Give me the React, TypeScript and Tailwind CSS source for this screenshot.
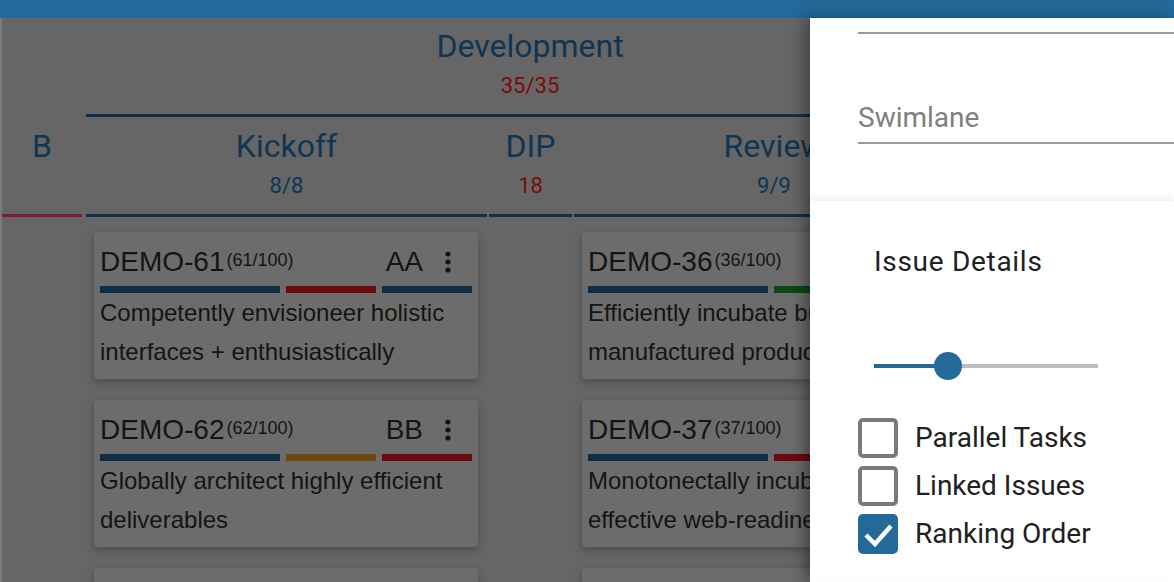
import React from 'react';

interface Bar {
  cls: string;
}

interface Issue {
  id: string;
  score: number;
  who?: string;
  bars: Bar[];
  text: string;
}

const BLUE = 'flex-[2] bg-[#0f2d45]';
const RED = 'flex-1 bg-[#6b0a0e]';
const ORANGE = 'flex-1 bg-[#6e4612]';
const GREEN = 'flex-1 bg-[#0b4814]';
const NAVY = 'flex-1 bg-[#0f2d45]';

const kickoff: Issue[] = [
  { id: 'DEMO-61', score: 61, who: 'AA', bars: [{ cls: BLUE }, { cls: RED }, { cls: NAVY }], text: 'Competently envisioneer holistic interfaces + enthusiastically' },
  { id: 'DEMO-62', score: 62, who: 'BB', bars: [{ cls: BLUE }, { cls: ORANGE }, { cls: RED }], text: 'Globally architect highly efficient deliverables' },
  { id: 'DEMO-63', score: 63, who: 'CC', bars: [{ cls: BLUE }, { cls: GREEN }, { cls: NAVY }], text: 'Dynamically leverage existing scalable methods' },
];

const review: Issue[] = [
  { id: 'DEMO-36', score: 36, who: 'DD', bars: [{ cls: BLUE }, { cls: GREEN }, { cls: NAVY }], text: 'Efficiently incubate business manufactured products' },
  { id: 'DEMO-37', score: 37, who: 'AA', bars: [{ cls: BLUE }, { cls: RED }, { cls: NAVY }], text: 'Monotonectally incubate cost effective web-readiness' },
  { id: 'DEMO-38', score: 38, who: 'BB', bars: [{ cls: BLUE }, { cls: ORANGE }, { cls: RED }], text: 'Rapidly synthesize proactive action items' },
];

const Kebab = () => (
  <svg width="8" height="22" viewBox="0 0 8 22">
    <circle cx="4" cy="3" r="2.6" fill="#141414" />
    <circle cx="4" cy="11" r="2.6" fill="#141414" />
    <circle cx="4" cy="19" r="2.6" fill="#141414" />
  </svg>
);

const IssueCard: React.FC<{ issue: Issue }> = ({ issue }) => (
  <div className="bg-[#6c6c6c] rounded-[4px] shadow-[0_3px_9px_rgba(0,0,0,0.28)] px-[6px] pt-[12px] pb-[8px] font-['Liberation_Sans',Arial,sans-serif] text-[#141414] shrink-0">
    <div className="flex items-start h-[36px]">
      <span className="text-[28px] leading-[36px]">{issue.id}</span>
      <span className="text-[18px] leading-[18px] mt-[7px] ml-[2px]">({issue.score}/100)</span>
      {issue.who && (
        <>
          <span className="ml-auto mr-[5px] text-[28px] leading-[36px]">{issue.who}</span>
          <div className="w-[40px] mr-[4px] h-[36px] flex items-center justify-center">
            <Kebab />
          </div>
        </>
      )}
    </div>
    <div className="flex gap-[6px] mt-[6px] h-[7px]">
      {issue.bars.map((b, i) => (
        <div key={i} className={`h-full ${b.cls}`} />
      ))}
    </div>
    <p className="text-[24px] leading-[39px]">{issue.text}</p>
  </div>
);

const Column: React.FC<{
  name: string;
  count: string;
  countCls: string;
  widthCls: string;
  padCls: string;
  issues: Issue[];
}> = ({ name, count, countCls, widthCls, padCls, issues }) => (
  <div className={`${widthCls} shrink-0 flex flex-col`}>
    <div className="shrink-0 mt-[13px] text-[32px] leading-[32px] text-center text-[#0f3553]">{name}</div>
    <div className={`shrink-0 mt-[12px] text-[22px] leading-[24px] text-center ${countCls}`}>{count}</div>
    <div className="shrink-0 mt-[16px] h-[3px] bg-[#0e304c]" />
    <div className={`mt-[15px] flex flex-col gap-[21px] ${padCls}`}>
      {issues.map((it) => (
        <IssueCard key={it.id} issue={it} />
      ))}
    </div>
  </div>
);

const CheckRow: React.FC<{ label: string; checked?: boolean }> = ({ label, checked }) => (
  <div className="h-[48px] flex items-center gap-[17px]">
    {checked ? (
      <div className="w-[40px] h-[40px] rounded-[5px] bg-[#236a9b] flex items-center justify-center">
        <svg width="40" height="40" viewBox="0 0 40 40">
          <polyline points="8,21 17,30 33,12" fill="none" stroke="white" strokeWidth="4.5" />
        </svg>
      </div>
    ) : (
      <div className="w-[40px] h-[40px] rounded-[5px] border-[4px] border-[#7a7a7a]" />
    )}
    <span className="text-[28px] leading-[32px] text-[#212121]">{label}</span>
  </div>
);

export default function App() {
  return (
    <div className="w-[1174px] h-[582px] overflow-hidden flex flex-col font-['Roboto',sans-serif]">
      <div className="h-[18px] bg-[#23699a] shrink-0" />
      <div className="flex flex-1 min-h-0">
        {/* Board, dimmed */}
        <div className="flex-1 min-w-0 overflow-hidden bg-[#666666] flex items-start">
          <div className="w-[2px] h-full bg-[#7a7a7a] shrink-0" />
          <div className="w-[80px] shrink-0 flex flex-col pt-[112px]">
            <div className="text-[32px] leading-[32px] text-center text-[#0f3553]">B</div>
            <div className="mt-[52px] h-[3px] bg-[#7c1a3c]" />
          </div>
          <div className="w-[4px] shrink-0" />
          <div className="w-[888px] shrink-0 flex flex-col pt-[12px]">
            <div className="shrink-0 text-[32px] leading-[32px] text-center text-[#0f3553]">Development</div>
            <div className="shrink-0 mt-[12px] text-[22px] leading-[24px] text-center text-[#7d0a0a]">35/35</div>
            <div className="shrink-0 mt-[16px] h-[3px] bg-[#0e304c]" />
            <div className="flex gap-[2px]">
              <Column name="Kickoff" count="8/8" countCls="text-[#0f3553]" widthCls="w-[401px]" padCls="pl-[8px] pr-[9px]" issues={kickoff} />
              <Column name="DIP" count="18" countCls="text-[#7d0a0a]" widthCls="w-[83px]" padCls="px-[8px]" issues={[]} />
              <Column name="Review" count="9/9" countCls="text-[#0f3553]" widthCls="w-[400px]" padCls="px-[8px]" issues={review} />
            </div>
          </div>
        </div>

        {/* Settings drawer */}
        <aside className="w-[364px] shrink-0 bg-white relative z-10 shadow-[-6px_0_14px_rgba(0,0,0,0.35)] flex flex-col">
          <div className="h-[183px] shrink-0 pl-[48px]">
            <div className="h-[16px] border-b-2 border-[#9a9a9a]" />
            <div className="mt-[68px] pb-[8px] border-b-2 border-[#9a9a9a] text-[28px] leading-[32px] text-[#808080]">
              Swimlane
            </div>
          </div>
          <div className="flex-1 mb-[4px] bg-white shadow-[0_-3px_8px_rgba(0,0,0,0.07)] pl-[48px] pt-[45px]">
            <div className="ml-[16px] text-[28px] leading-[32px] tracking-[0.7px] text-[#212121]">Issue Details</div>
            <div className="ml-[16px] mt-[74px] w-[224px] h-[28px] relative">
              <div className="absolute left-0 right-0 top-[12px] h-[4px] bg-[#bdbdbd]" />
              <div className="absolute left-0 w-[74px] top-[12px] h-[4px] bg-[#236a9b]" />
              <div className="absolute left-[60px] top-0 w-[28px] h-[28px] rounded-full bg-[#236a9b]" />
            </div>
            <div className="mt-[34px] flex flex-col">
              <CheckRow label="Parallel Tasks" />
              <CheckRow label="Linked Issues" />
              <CheckRow label="Ranking Order" checked />
            </div>
          </div>
        </aside>
      </div>
    </div>
  );
}
